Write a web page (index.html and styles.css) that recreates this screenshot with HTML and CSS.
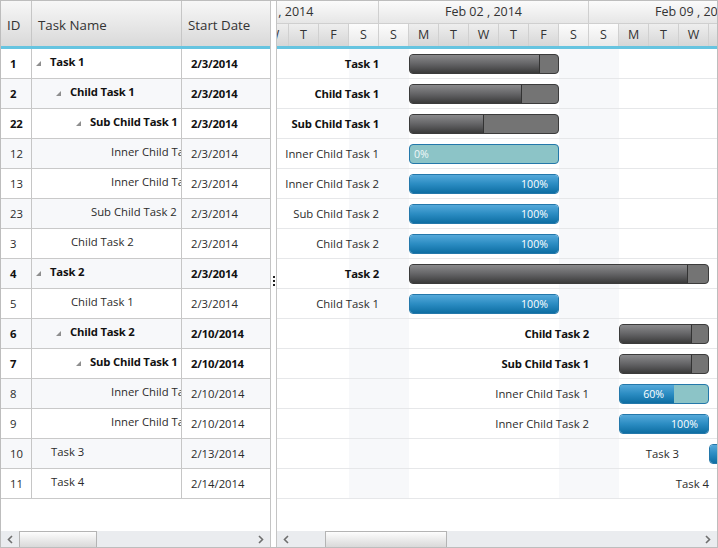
FILE: index.html
```html
<!DOCTYPE html>
<html>
<head>
<meta charset="utf-8">
<link rel="stylesheet" href="styles.css">
</head>
<body>
<div class="gantt">
  <div class="grid-pane">
    <div class="grid-head">
      <div class="c c-id">ID</div>
      <div class="c c-name">Task Name</div>
      <div class="c c-date">Start Date</div>
    </div>
    <div class="grid-rows">
      <div class="row parent"><div class="c c-id">1</div><div class="c c-name l0"><span class="exp"></span><span class="txt">Task 1</span></div><div class="c c-date">2/3/2014</div></div>
      <div class="row alt parent"><div class="c c-id">2</div><div class="c c-name l1"><span class="exp"></span><span class="txt">Child Task 1</span></div><div class="c c-date">2/3/2014</div></div>
      <div class="row parent"><div class="c c-id">22</div><div class="c c-name l2"><span class="exp"></span><span class="txt">Sub Child Task 1</span></div><div class="c c-date">2/3/2014</div></div>
      <div class="row alt"><div class="c c-id">12</div><div class="c c-name l3"><span class="sp"></span><span class="txt">Inner Child Task 1</span></div><div class="c c-date">2/3/2014</div></div>
      <div class="row"><div class="c c-id">13</div><div class="c c-name l3"><span class="sp"></span><span class="txt">Inner Child Task 2</span></div><div class="c c-date">2/3/2014</div></div>
      <div class="row alt"><div class="c c-id">23</div><div class="c c-name l2"><span class="sp"></span><span class="txt">Sub Child Task 2</span></div><div class="c c-date">2/3/2014</div></div>
      <div class="row"><div class="c c-id">3</div><div class="c c-name l1"><span class="sp"></span><span class="txt">Child Task 2</span></div><div class="c c-date">2/3/2014</div></div>
      <div class="row alt parent"><div class="c c-id">4</div><div class="c c-name l0"><span class="exp"></span><span class="txt">Task 2</span></div><div class="c c-date">2/3/2014</div></div>
      <div class="row"><div class="c c-id">5</div><div class="c c-name l1"><span class="sp"></span><span class="txt">Child Task 1</span></div><div class="c c-date">2/3/2014</div></div>
      <div class="row alt parent"><div class="c c-id">6</div><div class="c c-name l1"><span class="exp"></span><span class="txt">Child Task 2</span></div><div class="c c-date">2/10/2014</div></div>
      <div class="row parent"><div class="c c-id">7</div><div class="c c-name l2"><span class="exp"></span><span class="txt">Sub Child Task 1</span></div><div class="c c-date">2/10/2014</div></div>
      <div class="row alt"><div class="c c-id">8</div><div class="c c-name l3"><span class="sp"></span><span class="txt">Inner Child Task 1</span></div><div class="c c-date">2/10/2014</div></div>
      <div class="row"><div class="c c-id">9</div><div class="c c-name l3"><span class="sp"></span><span class="txt">Inner Child Task 2</span></div><div class="c c-date">2/10/2014</div></div>
      <div class="row alt"><div class="c c-id">10</div><div class="c c-name l0"><span class="sp"></span><span class="txt">Task 3</span></div><div class="c c-date">2/13/2014</div></div>
      <div class="row"><div class="c c-id">11</div><div class="c c-name l0"><span class="sp"></span><span class="txt">Task 4</span></div><div class="c c-date">2/14/2014</div></div>
    </div>
    <div class="filler"></div>
    <div class="hscroll">
      <div class="arr"><svg width="6" height="9" viewBox="0 0 6 9"><polyline points="5,1 1.5,4.5 5,8" fill="none" stroke="#6f6f6f" stroke-width="1.6"/></svg></div>
      <div class="track"><div class="thumb" style="width:78px"></div></div>
      <div class="arr"><svg width="6" height="9" viewBox="0 0 6 9"><polyline points="1,1 4.5,4.5 1,8" fill="none" stroke="#6f6f6f" stroke-width="1.6"/></svg></div>
    </div>
  </div>

  <div class="splitter"><div class="grip"><i></i><i></i><i></i></div></div>

  <div class="chart-pane">
    <div class="chart-view">
      <div class="timeline">
        <div class="tl-head">
          <div class="weeks">
            <div class="week first">Jan 26 , 2014</div>
            <div class="week">Feb 02 , 2014</div>
            <div class="week">Feb 09 , 2014</div>
          </div>
          <div class="days">
            <div class="day we">S</div><div class="day">M</div><div class="day">T</div><div class="day">W</div><div class="day">T</div><div class="day">F</div><div class="day we">S</div>
            <div class="day we">S</div><div class="day">M</div><div class="day">T</div><div class="day">W</div><div class="day">T</div><div class="day">F</div><div class="day we">S</div>
            <div class="day we">S</div><div class="day">M</div><div class="day">T</div><div class="day">W</div><div class="day">T</div><div class="day">F</div><div class="day we">S</div>
          </div>
        </div>
        <div class="tl-rows">
          <div class="tl-row parent"><div class="lbl" style="width:241px">Task 1</div><div class="bar sum" style="width:150px"><div class="prog" style="width:130px"></div></div></div>
          <div class="tl-row parent"><div class="lbl" style="width:241px">Child Task 1</div><div class="bar sum" style="width:150px"><div class="prog" style="width:112px"></div></div></div>
          <div class="tl-row parent"><div class="lbl" style="width:241px">Sub Child Task 1</div><div class="bar sum" style="width:150px"><div class="prog" style="width:74px"></div></div></div>
          <div class="tl-row"><div class="lbl" style="width:241px">Inner Child Task 1</div><div class="bar task" style="width:150px"><div class="rest">0%</div></div></div>
          <div class="tl-row"><div class="lbl" style="width:241px">Inner Child Task 2</div><div class="bar task" style="width:150px"><div class="prog" style="width:148px">100%</div></div></div>
          <div class="tl-row"><div class="lbl" style="width:241px">Sub Child Task 2</div><div class="bar task" style="width:150px"><div class="prog" style="width:148px">100%</div></div></div>
          <div class="tl-row"><div class="lbl" style="width:241px">Child Task 2</div><div class="bar task" style="width:150px"><div class="prog" style="width:148px">100%</div></div></div>
          <div class="tl-row parent"><div class="lbl" style="width:241px">Task 2</div><div class="bar sum" style="width:300px"><div class="prog" style="width:278px"></div></div></div>
          <div class="tl-row"><div class="lbl" style="width:241px">Child Task 1</div><div class="bar task" style="width:150px"><div class="prog" style="width:148px">100%</div></div></div>
          <div class="tl-row parent"><div class="lbl" style="width:451px">Child Task 2</div><div class="bar sum" style="width:90px"><div class="prog" style="width:72px"></div></div></div>
          <div class="tl-row parent"><div class="lbl" style="width:451px">Sub Child Task 1</div><div class="bar sum" style="width:90px"><div class="prog" style="width:72px"></div></div></div>
          <div class="tl-row"><div class="lbl" style="width:451px">Inner Child Task 1</div><div class="bar task" style="width:90px"><div class="prog" style="width:54px">60%</div></div></div>
          <div class="tl-row"><div class="lbl" style="width:451px">Inner Child Task 2</div><div class="bar task" style="width:90px"><div class="prog" style="width:88px">100%</div></div></div>
          <div class="tl-row"><div class="lbl" style="width:541px">Task 3</div><div class="bar task" style="width:60px"><div class="prog" style="width:58px">100%</div></div></div>
          <div class="tl-row"><div class="lbl" style="width:571px">Task 4</div><div class="bar task" style="width:30px"><div class="prog" style="width:28px"></div></div></div>
        </div>
      </div>
    </div>
    <div class="hscroll">
      <div class="arr"><svg width="6" height="9" viewBox="0 0 6 9"><polyline points="5,1 1.5,4.5 5,8" fill="none" stroke="#6f6f6f" stroke-width="1.6"/></svg></div>
      <div class="track"><div class="thumb" style="width:122px;margin-left:30px"></div></div>
      <div class="arr"><svg width="6" height="9" viewBox="0 0 6 9"><polyline points="1,1 4.5,4.5 1,8" fill="none" stroke="#6f6f6f" stroke-width="1.6"/></svg></div>
    </div>
  </div>
</div>
</body>
</html>
```

FILE: styles.css
```css
html, body {
  margin: 0;
  padding: 0;
  background: #fff;
}
body {
  font-family: "Open Sans", "Noto Sans", sans-serif;
  font-size: 11.3px;
  color: #2b2b2b;
}
.gantt {
  width: 718px;
  height: 548px;
  box-sizing: border-box;
  border: 1px solid #bdbdbd;
  display: flex;
  overflow: hidden;
}

/* ---------- left grid ---------- */
.grid-pane {
  width: 270px;
  flex: none;
  box-sizing: border-box;
  border-right: 1px solid #c4c4c4;
  display: flex;
  flex-direction: column;
}
.grid-head {
  height: 45px;
  border-bottom: 3px solid #66c4e0;
  display: flex;
  background: linear-gradient(#f7f7f7, #d9d9d9);
  font-size: 13.3px;
  color: #333;
}
.grid-head .c {
  padding: 3px 0 0 6px;
  display: flex;
  align-items: center;
}
.c {
  box-sizing: border-box;
  border-right: 1px solid #c6c6c6;
  overflow: hidden;
  white-space: nowrap;
  flex: none;
}
.c-id { width: 31px; }
.c-name { width: 150px; }
.c-date { width: 88px; border-right: none; }

.row {
  height: 30px;
  box-sizing: border-box;
  border-bottom: 1px solid #c9c9c9;
  display: flex;
  background: #fff;
}
.row.alt { background: #f7f8fa; }
.row.parent { font-weight: 700; color: #111; letter-spacing: -0.2px; }
.row .c { display: flex; align-items: center; }
.row .c-id { padding-left: 9px; }
.row .c-date { padding-left: 9px; }
.row .c-name { padding-bottom: 4px; }
.l0 { padding-left: 3px; }
.l1 { padding-left: 23px; }
.l2 { padding-left: 43px; }
.l3 { padding-left: 63px; }
.exp {
  flex: none;
  width: 0;
  height: 0;
  border-style: solid;
  border-width: 0 0 5px 5px;
  border-color: transparent transparent #8e8e8e transparent;
  margin: 3px 9px 0 1px;
}
.sp { flex: none; width: 16px; }

.filler { flex: 1; }

/* ---------- scrollbars ---------- */
.hscroll {
  height: 16px;
  flex: none;
  display: flex;
  background: #eaecef;
}
.arr {
  width: 18px;
  flex: none;
  display: flex;
  align-items: center;
  justify-content: center;
}
.track {
  flex: 1;
  display: flex;
}
.thumb {
  flex: none;
  box-sizing: border-box;
  height: 16px;
  border: 1px solid #b4b4b4;
  border-bottom: none;
  background: linear-gradient(#fdfdfd, #d9d9d9);
}

/* ---------- splitter ---------- */
.splitter {
  width: 5px;
  flex: none;
  display: flex;
  align-items: center;
  justify-content: center;
  padding-top: 14px;
  box-sizing: border-box;
}
.grip {
  display: flex;
  flex-direction: column;
  gap: 2px;
}
.grip i {
  display: block;
  width: 2px;
  height: 2px;
  background: #222;
}

/* ---------- chart ---------- */
.chart-pane {
  flex: 1;
  min-width: 0;
  box-sizing: border-box;
  border-left: 1px solid #c4c4c4;
  display: flex;
  flex-direction: column;
}
.chart-view {
  flex: 1;
  overflow: hidden;
}
.timeline {
  width: 630px;
  margin-left: -109px;
}
.tl-head {
  height: 45px;
  border-bottom: 3px solid #66c4e0;
  color: #333;
}
.weeks {
  display: flex;
  height: 23px;
  box-sizing: border-box;
  border-bottom: 1px solid #cfcfcf;
  background: linear-gradient(#fbfbfb, #e6e6e6);
}
.week {
  width: 210px;
  flex: none;
  box-sizing: border-box;
  border-left: 1px solid #cfcfcf;
  text-align: center;
  font-size: 12.5px;
  line-height: 22px;
}
.week.first { padding-left: 6px; }
.days {
  display: flex;
  height: 22px;
}
.day {
  width: 30px;
  flex: none;
  box-sizing: border-box;
  border-left: 1px solid #d0d0d0;
  text-align: center;
  font-size: 12.5px;
  line-height: 22px;
  background: linear-gradient(#eeeeee, #d6d6d6);
}
.day.we {
  background: linear-gradient(#fcfcfc, #e9e9e9);
}
.tl-rows {
  background: repeating-linear-gradient(to right, #f7f8fa 0 31px, #fff 31px 181px, #f7f8fa 181px 210px);
}
.tl-row {
  height: 30px;
  box-sizing: border-box;
  border-bottom: 1px solid #e6e7e9;
  display: flex;
  align-items: flex-start;
}
.tl-row.parent .lbl { font-weight: 700; color: #111; letter-spacing: -0.2px; }
.lbl {
  flex: none;
  box-sizing: border-box;
  padding-right: 30px;
  text-align: right;
  white-space: nowrap;
  line-height: 29px;
}
.bar {
  flex: none;
  box-sizing: border-box;
  height: 20px;
  margin-top: 5px;
  border-radius: 4px;
  overflow: hidden;
  display: flex;
}
.bar.sum {
  background: #747474;
  border: 1px solid #3b3b3b;
}
.bar.sum .prog {
  height: 100%;
  box-sizing: border-box;
  border-right: 1px solid #333;
  background: linear-gradient(#8a8a8c, #606062 55%, #3a3a3a);
}
.bar.task {
  background: #8cc4c7;
  border: 1px solid #2478aa;
}
.bar.task .prog {
  height: 100%;
  box-sizing: border-box;
  background: linear-gradient(#55a9da, #2b8cc2 50%, #0e6ea3);
  color: #fff;
  font-size: 10.6px;
  line-height: 18px;
  text-align: right;
  padding-right: 10px;
  white-space: nowrap;
}
.bar.task .rest {
  color: #f1f8f8;
  font-size: 10.6px;
  line-height: 18px;
  padding-left: 4px;
}
```
